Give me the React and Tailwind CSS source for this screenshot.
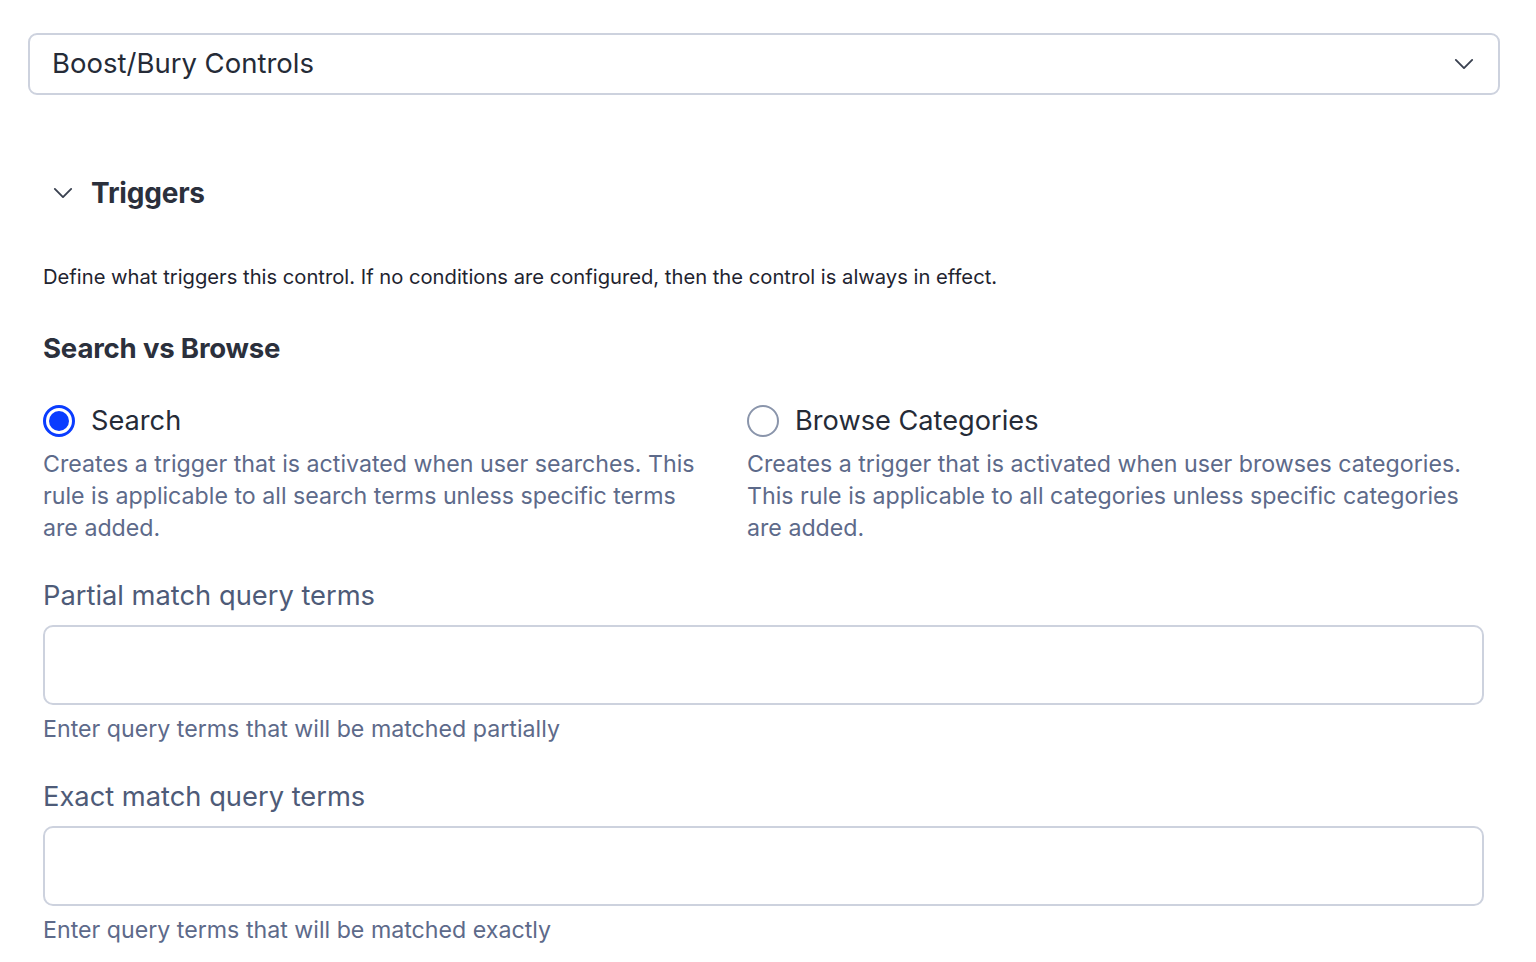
import React, { useState } from 'react';

const Chevron = ({ className }) => (
  <svg className={className} viewBox="0 0 24 24" fill="none" stroke="currentColor" strokeWidth="1.6" strokeLinecap="round" strokeLinejoin="round">
    <path d="M5 8.5l7 7 7-7" />
  </svg>
);

const Radio = ({ checked }) =>
  checked ? (
    <span className="flex h-8 w-8 shrink-0 items-center justify-center rounded-full border-[3px] border-[#0a3cff]">
      <span className="h-[20px] w-[20px] rounded-full bg-[#0a3cff]" />
    </span>
  ) : (
    <span className="h-8 w-8 shrink-0 rounded-full border-2 border-[#8a95ab]" />
  );

const App = () => {
  const [mode, setMode] = useState('search');

  const options = [
    {
      id: 'search',
      label: 'Search',
      text: 'Creates a trigger that is activated when user searches. This rule is applicable to all search terms unless specific terms are added.',
    },
    {
      id: 'browse',
      label: 'Browse Categories',
      text: 'Creates a trigger that is activated when user browses categories. This rule is applicable to all categories unless specific categories are added.',
    },
  ];

  const fields = [
    { label: 'Partial match query terms', help: 'Enter query terms that will be matched partially' },
    { label: 'Exact match query terms', help: 'Enter query terms that will be matched exactly' },
  ];

  return (
    <div className="min-h-screen bg-white px-7 pt-[33px] font-['Inter',sans-serif] text-[#252b37]">
      <div className="flex h-[62px] w-[1472px] items-center justify-between rounded-[9px] border-2 border-[#cdd2de] pl-[22px] pr-5">
        <span className="text-[27.5px]">Boost/Bury Controls</span>
        <Chevron className="h-7 w-7 text-[#3a4150]" />
      </div>

      <div className="px-[15px]">
        <div className="mt-[77px] flex items-center gap-[14px] pl-[6px]">
          <Chevron className="h-7 w-7 text-[#3a4150]" />
          <h2 className="text-[28px] font-bold tracking-[-0.2px] text-[#2b303c]">Triggers</h2>
        </div>

        <p className="mt-[48px] text-[20.2px] text-[#1f2430]">
          Define what triggers this control. If no conditions are configured, then the control is always in effect.
        </p>

        <h3 className="mt-[36px] text-[27.6px] font-bold tracking-[-0.2px] text-[#2b303c]">Search vs Browse</h3>

        <div className="mt-[31px] grid grid-cols-[704px_1fr]">
          {options.map((o, i) => (
            <div key={o.id} className={`cursor-pointer ${i === 0 ? 'pr-[40px]' : 'pr-6'}`} onClick={() => setMode(o.id)}>
              <div className="flex items-center gap-4">
                <Radio checked={mode === o.id} />
                <span className="text-[27.2px] text-[#252b37]">{o.label}</span>
              </div>
              <p className="mt-[7px] text-[23.2px] leading-[32px] text-[#5d6a8a]">{o.text}</p>
            </div>
          ))}
        </div>

        <div className="mt-[34px] flex w-[1441px] flex-col">
          {fields.map((f, i) => (
            <div key={f.label} className={i > 0 ? 'mt-[34px]' : ''}>
              <label className="block text-[27.3px] leading-[36px] text-[#4e5b78]">{f.label}</label>
              <input className="mt-[11px] block h-[80px] w-full rounded-[10px] border-2 border-[#cdd2de] px-4 text-[22px] outline-none" />
              <p className="mt-[8px] text-[23.2px] leading-[32px] text-[#5d6a8a]">{f.help}</p>
            </div>
          ))}
        </div>
      </div>
    </div>
  );
};

export default App;
